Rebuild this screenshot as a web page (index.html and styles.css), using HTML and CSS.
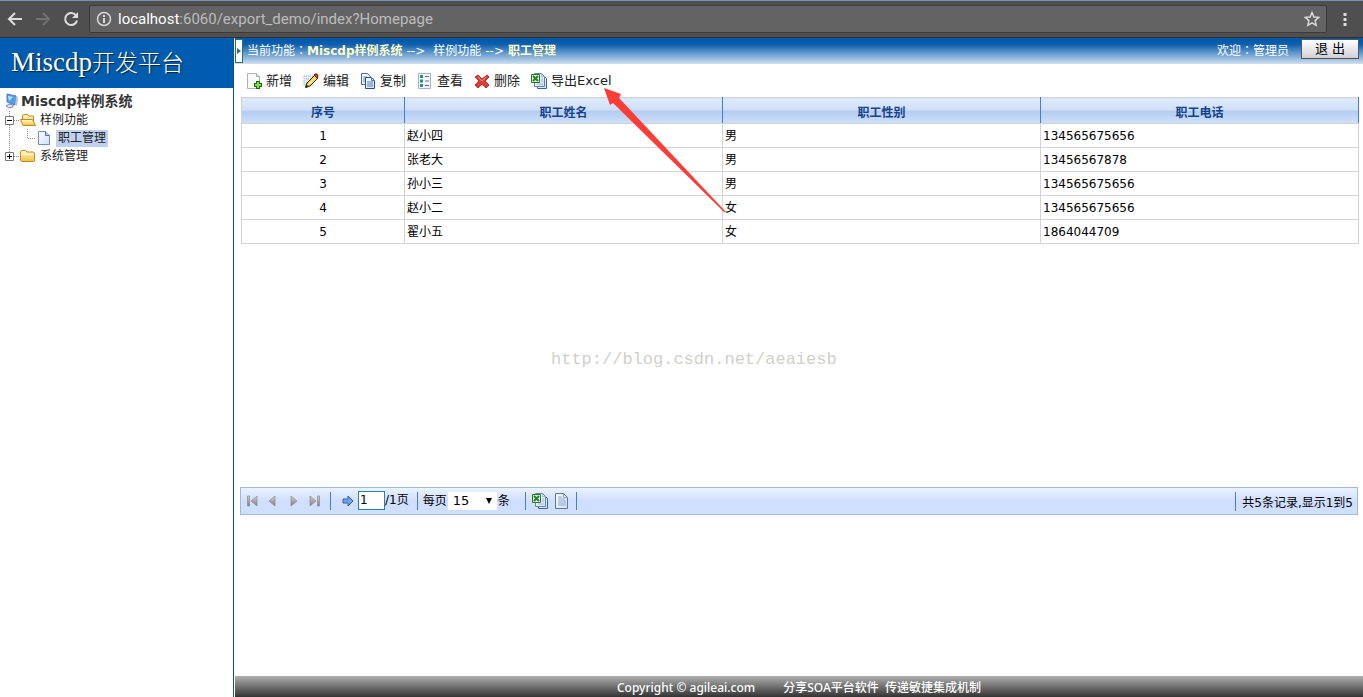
FILE: index.html
```html
<!DOCTYPE html>
<html lang="zh-CN">
<head>
<meta charset="utf-8">
<title>Miscdp开发平台</title>
<link rel="stylesheet" href="styles.css">
</head>
<body>
<svg class="defs" aria-hidden="true">
  <defs>
    <linearGradient id="folder" x1="0" y1="0" x2="0" y2="1"><stop offset="0" stop-color="#fffbd0"/><stop offset="1" stop-color="#efc043"/></linearGradient>
    <linearGradient id="paper" x1="0" y1="0" x2="1" y2="1"><stop offset="0" stop-color="#fff"/><stop offset="1" stop-color="#cfe0fa"/></linearGradient>
    <linearGradient id="metal" x1="0" y1="0" x2="0" y2="1"><stop offset="0" stop-color="#d2d2d2"/><stop offset="1" stop-color="#808080"/></linearGradient>
  </defs>
  <symbol id="i-excel" viewBox="0 0 16 16">
    <path d="M6.500 2.500h6l3 3v10h-9z" fill="url(#paper)" stroke="#3f659b"/>
    <path d="M3.500.5h7l3 3v10h-10z" fill="url(#paper)" stroke="#5f83b8"/>
    <path d="M10.500.5v3h3M10 6h2M10 8h2M6 11h6" fill="none" stroke="#9db6dc"/>
    <path d="M.5 1.500h8v8h-8z" fill="#e5f3df" stroke="#2c762c"/>
    <path d="M2 3l5 5M7 3L2 8" stroke="#23852a" stroke-width="2"/>
  </symbol>
</svg>

<div class="browser">
  <button class="nav" aria-label="后退"><svg width="16" height="16" viewBox="0 0 16 16"><path d="M15 8H2M8 2L2 8l6 6" fill="none" stroke="#ddd" stroke-width="2"/></svg></button>
  <button class="nav" aria-label="前进"><svg width="16" height="16" viewBox="0 0 16 16"><path d="M1 8h13M8 2l6 6-6 6" fill="none" stroke="#717171" stroke-width="2"/></svg></button>
  <button class="nav" aria-label="刷新"><svg width="16" height="16" viewBox="0 0 16 16"><path d="M13 4.500A6 6 0 1 0 14 9.500" fill="none" stroke="#ddd" stroke-width="2"/><path d="M15 1v6H9z" fill="#ddd"/></svg></button>
  <div class="address">
    <svg width="16" height="16" viewBox="0 0 16 16"><circle cx="8" cy="8" r="6.500" fill="none" stroke="#d8d8d8" stroke-width="1.500"/><path d="M8 4v2M8 7v5" stroke="#d8d8d8" stroke-width="2"/></svg>
    <span class="url"><b>localhost</b>:6060/export_demo/index?Homepage</span>
    <svg width="16" height="16" viewBox="0 0 16 16"><path d="M8 1.500l1.900 4.500 4.900.4-3.700 3.200 1.100 4.800L8 11.900l-4.200 2.500 1.100-4.800L1.200 6.400 6.100 6z" fill="none" stroke="#ddd" stroke-width="1.400"/></svg>
  </div>
  <button class="nav more" aria-label="菜单"><svg width="4" height="14" viewBox="0 0 4 14"><path d="M.5 1h3v3h-3zM.5 6h3v3h-3zM.5 11h3v3h-3z" fill="#ddd"/></svg></button>
</div>

<div class="app">
  <aside class="sidebar">
    <h1 class="logo">Miscdp<span>开发平台</span></h1>
    <nav class="tree">
      <a class="node root" href="#"><svg width="16" height="16" viewBox="0 0 16 16"><path d="M3 1l9 2-1 9-8-3z" fill="#4aa0ef" stroke="#6977a9"/><path d="M4 3l5 1-4 4z" fill="#b9e3ff"/><path d="M12 3l2 1-1 9-2-1z" fill="#b4bed5"/><path d="M5 11l4 1v2l-4 1-3-2z" fill="#d9e0ee" stroke="#7a8db5"/></svg>Miscdp样例系统</a>
      <a class="node" href="#"><svg width="16" height="18" viewBox="0 0 16 18"><path d="M5.500 0v18M10 9.500h6" stroke="#888" stroke-dasharray="1 1"/><path d="M1.500 5.500h8v8h-8z" fill="#fff" stroke="#777"/><path d="M3 9.500h5" stroke="#000"/></svg><svg width="16" height="18" viewBox="0 0 16 18"><path d="M2.500 13V5l1-1.500h4L9 5h4.500v9H4z" fill="url(#folder)" stroke="#c58a1d"/><path d="M3 14.500L.5 8.500h12l3 6z" fill="url(#folder)" stroke="#c58a1d"/></svg><span>样例功能</span></a>
      <a class="node" href="#"><svg width="32" height="18" viewBox="0 0 32 18"><path d="M5.500 0v18M23.500 0v9.500H32" fill="none" stroke="#888" stroke-dasharray="1 1"/></svg><svg width="16" height="16" viewBox="0 0 16 16"><path d="M2.500 1.500h7l4 4v9h-11z" fill="url(#paper)" stroke="#6f8dcc"/><path d="M9.500 1.500v4h4" fill="#b6cdf5" stroke="#4f73bd"/></svg><span class="selected">职工管理</span></a>
      <a class="node" href="#"><svg width="16" height="18" viewBox="0 0 16 18"><path d="M5.500 0v5M10 9.500h6" stroke="#888" stroke-dasharray="1 1"/><path d="M1.500 5.500h8v8h-8z" fill="#fff" stroke="#777"/><path d="M3 9.500h5M5.500 7v5" stroke="#000"/></svg><svg width="16" height="18" viewBox="0 0 16 18"><path d="M1.500 14.500l-1-1V5l1-1.500h4L7 5h6.500l1 1v8l-1 .5z" fill="url(#folder)" stroke="#c58a1d"/><path d="M1 7.500h13" stroke="#fff8c6"/></svg><span>系统管理</span></a>
    </nav>
  </aside>

  <main class="main">
    <header class="topbar">
      <button class="handle" aria-label="展开"><svg width="5" height="6" viewBox="0 0 5 6"><path d="M0 0l4 3-4 3z" fill="#23756c"/></svg></button>
      <p class="crumbs">当前功能<span class="colon" lang="zh-TW">：</span><b>Miscdp样例系统</b><span class="arrow">--&gt;</span><span class="step">样例功能</span><span class="arrow">--&gt;</span><b>职工管理</b></p>
      <p class="welcome">欢迎<span class="colon" lang="zh-TW">：</span>管理员</p>
      <button class="exit">退 出</button>
    </header>

    <div class="toolbar">
      <button><svg width="16" height="16" viewBox="0 0 16 16"><path d="M1.500.5h9l3 3v12h-12z" fill="#fafafa" stroke="#b0b0b0"/><path d="M10.500.5v3h3" fill="#ddd" stroke="#aaa"/><path d="M12 8v8M8 12h8" stroke="#216813" stroke-width="4"/><path d="M12 9v6M9 12h6" stroke="#77e34a" stroke-width="2"/></svg>新增</button>
      <button><svg width="16" height="16" viewBox="0 0 16 16"><path d="M1 3h10v11H1z" fill="#e3efff"/><path d="M1 3h10M1 3v10M3 6h6M3 9h5" stroke="#8ba6d1" stroke-dasharray="1 1"/><path d="M3 14l1-4 8-8 3 3-8 8z" fill="#ffd83d" stroke="#282010"/><path d="M11 2l1-1h2l1 2-1 2z" fill="#dc3d2d" stroke="#681e16"/><path d="M2 15l1-4 3 3z" fill="#222"/><path d="M6 11l6-6" stroke="#fff6ab"/></svg>编辑</button>
      <button><svg width="16" height="16" viewBox="0 0 16 16"><path d="M1.500.5h6l3 3v8h-9z" fill="url(#paper)" stroke="#456da7"/><path d="M3 4h4M3 6h4M3 8h4" stroke="#6f91c2"/><path d="M5.500 4.500h6l3 3v8h-9z" fill="url(#paper)" stroke="#294f8c"/><path d="M11.500 4.500v3h3M7 9h6M7 11h6M7 13h6" fill="none" stroke="#4e78b8"/></svg>复制</button>
      <button><svg width="16" height="16" viewBox="0 0 16 16"><path d="M1.500.5h12v15h-12z" fill="#f3f8ff" stroke="#a1b3d5"/><path d="M3 2h3v3H3zM3 6.500h3v3H3zM3 11h3v3H3z" fill="#318c75"/><path d="M8 3.500h4M8 8h4M8 12.500h4" stroke="#5b7199"/></svg>查看</button>
      <button><svg width="16" height="16" viewBox="0 0 16 16"><path d="M1 4l3-2 4 4 5-4 2 2-4 4 4 4-3 3-4-4-4 4-3-3 4-4z" fill="#e63b32" stroke="#b5302a"/><path d="M4 4l4 4 4-4" fill="none" stroke="#ff9589"/></svg>删除</button>
      <button><svg width="16" height="16"><use href="#i-excel"/></svg>导出Excel</button>
    </div>

    <section class="grid">
      <table>
        <colgroup><col class="c-no"><col><col><col></colgroup>
        <thead><tr><th>序号</th><th>职工姓名</th><th>职工性别</th><th>职工电话</th></tr></thead>
        <tbody>
          <tr><td>1</td><td>赵小四</td><td>男</td><td>134565675656</td></tr>
          <tr><td>2</td><td>张老大</td><td>男</td><td>13456567878</td></tr>
          <tr><td>3</td><td>孙小三</td><td>男</td><td>134565675656</td></tr>
          <tr><td>4</td><td>赵小二</td><td>女</td><td>134565675656</td></tr>
          <tr><td>5</td><td>翟小五</td><td>女</td><td>1864044709</td></tr>
        </tbody>
      </table>
    </section>

    <div class="pager">
      <button aria-label="首页"><svg width="12" height="12" viewBox="0 0 12 12"><path d="M1.500 1h2v10h-2zM11 1v10L5 6z" fill="url(#metal)" stroke="#8b8b8b" stroke-width=".7"/></svg></button>
      <button aria-label="上一页"><svg width="12" height="12" viewBox="0 0 12 12"><path d="M8 1v10L2 6z" fill="url(#metal)" stroke="#8b8b8b" stroke-width=".7"/></svg></button>
      <button aria-label="下一页"><svg width="12" height="12" viewBox="0 0 12 12"><path d="M3 1v10l6-5z" fill="url(#metal)" stroke="#8b8b8b" stroke-width=".7"/></svg></button>
      <button aria-label="末页"><svg width="12" height="12" viewBox="0 0 12 12"><path d="M1 1v10l6-5zM8.500 1h2v10h-2z" fill="url(#metal)" stroke="#8b8b8b" stroke-width=".7"/></svg></button>
      <i class="sep"></i>
      <button class="go" aria-label="跳转"><svg width="12" height="12" viewBox="0 0 12 12"><path d="M1 4h5V1l5 5-5 5V8H1z" fill="#6fa3ec" stroke="#2d60ae"/></svg></button>
      <label class="page"><input type="text" value="1" aria-label="页码">/1页</label>
      <i class="sep"></i>
      <label class="size">每页<select><option>15</option></select>条</label>
      <i class="sep"></i>
      <button class="file" aria-label="导出Excel"><svg width="16" height="16"><use href="#i-excel"/></svg></button>
      <button class="file" aria-label="导出文本"><svg width="16" height="16" viewBox="0 0 16 16"><path d="M1.500.5h8l4 4v11h-12z" fill="url(#paper)" stroke="#5877a5"/><path d="M9.500.5v4h4M4 4h4M4 6h7M4 8h8M4 10h8M4 12h8" fill="none" stroke="#8ba6cf"/></svg></button>
      <i class="sep last"></i>
      <p class="total">共5条记录,显示1到5</p>
    </div>

    <footer class="footer"><span>Copyright © agileai.com</span><span>分享SOA平台软件&nbsp; 传递敏捷集成机制</span></footer>
  </main>
</div>

<svg class="pointer" width="124" height="126" viewBox="0 0 124 126" aria-hidden="true"><path d="M0 0l17 6-2 4 107 114h-2L9 15l-3 2z" fill="#fb3d38"/></svg>
<p class="watermark">http://blog.csdn.net/aeaiesb</p>
</body>
</html>
```
FILE: styles.css
```css
* { box-sizing: border-box; }
body {
  margin: 0;
  height: 100vh;
  display: flex;
  flex-direction: column;
  background: #fff;
  color: #222;
  font: 12px/18px "DejaVu Sans", "Noto Sans CJK SC", sans-serif;
}
p, h1 { margin: 0; }
svg { flex: none; display: block; }
button { padding: 0; border: 0; background: none; font: inherit; color: inherit; }
a { color: inherit; text-decoration: none; }
.defs { position: absolute; width: 0; height: 0; }

.browser {
  display: flex;
  align-items: center;
  flex: none;
  height: 38px;
  gap: 12px;
  padding: 0 12px 0 7px;
  background: #4f4f4f;
  border-top: 1px solid #7893ac;
  border-bottom: 1px solid #303030;
}
.address {
  display: flex;
  align-items: center;
  flex: 1;
  gap: 6px;
  height: 28px;
  margin-left: -2px;
  padding: 0 6px;
  background: #636363;
  border: 1px solid #3b3b3b;
  border-radius: 2px;
}
.url { flex: 1; color: #bcbcbc; font: 15px/20px Roboto, sans-serif; }
.url b { color: #fff; font-weight: 400; }
.nav.more { padding: 0 4px; }

.app { flex: 1; display: flex; min-height: 0; }
.sidebar { width: 234px; flex: none; border-right: 1px solid #00569f; }
.logo {
  height: 50px;
  padding: 0 11px;
  background: #005cae;
  color: #fff;
  font: 27px/48px "Liberation Serif", "Noto Sans CJK SC", serif;
  text-shadow: 1px 1px 1px #123;
  white-space: nowrap;
}
.logo span { font-size: 23px; font-weight: 300; }
.tree { padding: 3px 4px; }
.node { display: flex; align-items: center; height: 18px; white-space: nowrap; }
.node span { padding: 0 2px; margin-left: 2px; line-height: 17px; }
.node .selected { background: #bfd1ef; margin-left: 4px; }
.root { height: 20px; font-size: 14px; font-weight: 700; gap: 1px; color: #333; }

.main { flex: 1; min-width: 0; display: flex; flex-direction: column; padding-left: 1px; }
.topbar {
  display: flex;
  align-items: center;
  height: 26px;
  padding-right: 4px;
  color: #fff;
  background: linear-gradient(#0055a7, #0e60af 25%, #d0e0f0);
}
.handle {
  width: 8px;
  height: 24px;
  padding-left: 1px;
  background: #fff;
  border: 1px solid #23756c;
}
.crumbs { margin-left: 4px; white-space: nowrap; }
.crumbs b { color: #ffffc8; }
.colon { font-family: "Noto Sans CJK TC", sans-serif; line-height: 1; }
.arrow { margin: 0 4px; }
.step { margin-left: 4px; }
.welcome { margin-left: auto; }
.exit {
  width: 58px;
  height: 20px;
  margin: 0 0 4px 12px;
  border: 1px solid #555;
  background: linear-gradient(#fff, #d0d0d8);
  color: #000;
  font: 13px/16px "DejaVu Sans", "Noto Sans CJK SC", sans-serif;
}

.toolbar { display: flex; align-items: center; height: 33px; padding-left: 11px; gap: 11px; }
.toolbar button { display: flex; align-items: center; gap: 4px; font-size: 13px; white-space: nowrap; }

.grid { min-height: 390px; padding: 0 4px 0 6px; }
table { width: 100%; table-layout: fixed; border-collapse: collapse; color: #000; }
.c-no { width: 163px; }
th {
  height: 26px;
  padding: 4px 0 0;
  border: 1px solid #d4d4d4;
  border-right-color: #3f81ce;
  background: linear-gradient(#dfe9fa, #d0dff7 49%, #b3ccf0 50%, #cfdffa);
  color: #15428b;
  line-height: 18px;
}
td { height: 24px; padding: 0 2px; border: 1px solid #d4d4d4; }
td:first-child { text-align: center; }

.pager {
  display: flex;
  align-items: center;
  height: 28px;
  margin: 0 5px;
  padding: 0 4px 0 5px;
  gap: 9px;
  color: #000;
  background: linear-gradient(#ebf2ff, #d0dfff 50%, #d0dfff);
  border: 1px solid #9ebae1;
  white-space: nowrap;
}
.pager label { display: flex; align-items: center; }
.sep { width: 1px; height: 18px; background: #4a7ebb; }
.go { margin-left: 2px; }
.page { margin: 0 -1px 2px -5px; }
.page input {
  width: 27px;
  height: 19px;
  padding: 0 1px;
  border: 1px solid #26829f;
  background: #fff;
  color: #000;
  font: 12px/16px "DejaVu Sans", sans-serif;
}
.size { position: relative; margin: 0 6px 0 -4px; }
.size select {
  width: 49px;
  height: 18px;
  margin: 0 1px;
  padding: 0 5px;
  appearance: none;
  border: 0;
  background: #fff;
  color: #000;
  font: 13px/18px "DejaVu Sans", sans-serif;
}
.size::after {
  content: "";
  position: absolute;
  right: 18px;
  border: 3px solid transparent;
  border-top: 6px solid #000;
  border-bottom: 0;
}
.file { margin-left: -3px; }
.sep.last { margin-left: -3px; }
.total { margin-left: auto; padding: 3px 0 0 6px; line-height: 16px; border-left: 1px solid #4a7ebb; }

.footer {
  display: flex;
  justify-content: center;
  gap: 28px;
  height: 21px;
  margin-top: auto;
  color: #fff;
  background: linear-gradient(#b0b0b0, #333);
  font: 500 12px/23px "Noto Sans", "Noto Sans CJK SC", sans-serif;
}

.pointer { position: absolute; left: 604px; top: 88px; }
.watermark {
  position: absolute;
  left: 551px;
  top: 349px;
  color: #d0d0cb;
  font: 17px/22px "Liberation Mono", monospace;
}
```
